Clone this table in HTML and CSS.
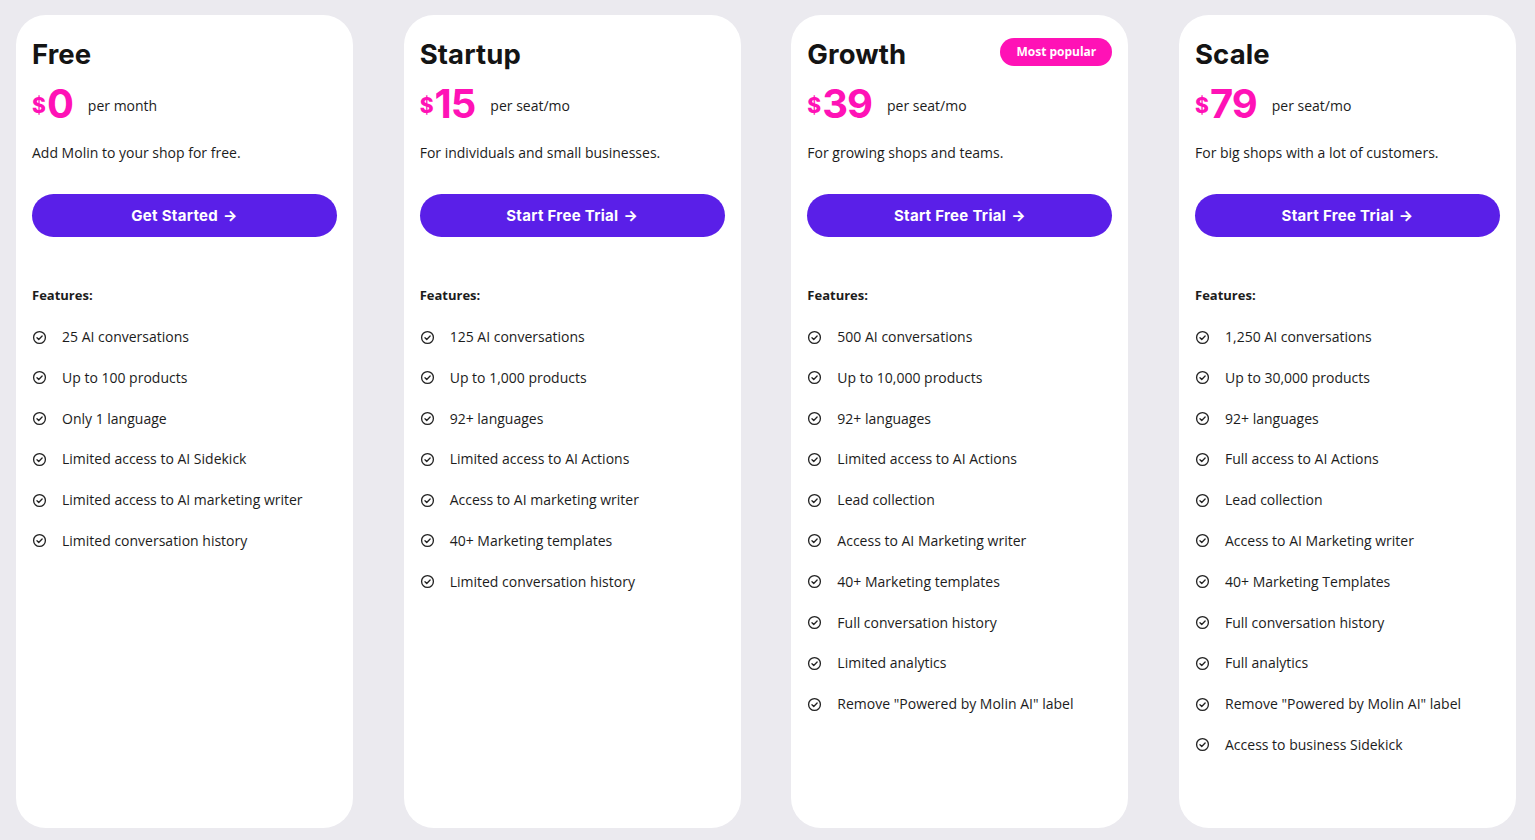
FILE: index.html
```html
<!DOCTYPE html>
<html lang="en">
<head>
<meta charset="utf-8">
<title>Pricing</title>
<link rel="stylesheet" href="styles.css">
</head>
<body>
<main class="plans">
  <section class="card">
    <div class="head"><h2 class="name">Free</h2></div>
    <div class="price"><span class="cur">$</span><span class="amount">0</span><span class="per">per month</span></div>
    <p class="desc">Add Molin to your shop for free.</p>
    <a class="btn" href="#">Get Started <span class="arrow">→</span></a>
    <h3 class="feat-title">Features:</h3>
    <ul class="features">
      <li><svg class="ic" viewBox="0 0 16 16"><circle cx="8" cy="8" r="6.3"/><path d="M5.3 8.2l1.9 1.9 3.6-3.7"/></svg>25 AI conversations</li>
      <li><svg class="ic" viewBox="0 0 16 16"><circle cx="8" cy="8" r="6.3"/><path d="M5.3 8.2l1.9 1.9 3.6-3.7"/></svg>Up to 100 products</li>
      <li><svg class="ic" viewBox="0 0 16 16"><circle cx="8" cy="8" r="6.3"/><path d="M5.3 8.2l1.9 1.9 3.6-3.7"/></svg>Only 1 language</li>
      <li><svg class="ic" viewBox="0 0 16 16"><circle cx="8" cy="8" r="6.3"/><path d="M5.3 8.2l1.9 1.9 3.6-3.7"/></svg>Limited access to AI Sidekick</li>
      <li><svg class="ic" viewBox="0 0 16 16"><circle cx="8" cy="8" r="6.3"/><path d="M5.3 8.2l1.9 1.9 3.6-3.7"/></svg>Limited access to AI marketing writer</li>
      <li><svg class="ic" viewBox="0 0 16 16"><circle cx="8" cy="8" r="6.3"/><path d="M5.3 8.2l1.9 1.9 3.6-3.7"/></svg>Limited conversation history</li>
    </ul>
  </section>

  <section class="card">
    <div class="head"><h2 class="name">Startup</h2></div>
    <div class="price"><span class="cur">$</span><span class="amount">15</span><span class="per">per seat/mo</span></div>
    <p class="desc">For individuals and small businesses.</p>
    <a class="btn" href="#">Start Free Trial <span class="arrow">→</span></a>
    <h3 class="feat-title">Features:</h3>
    <ul class="features">
      <li><svg class="ic" viewBox="0 0 16 16"><circle cx="8" cy="8" r="6.3"/><path d="M5.3 8.2l1.9 1.9 3.6-3.7"/></svg>125 AI conversations</li>
      <li><svg class="ic" viewBox="0 0 16 16"><circle cx="8" cy="8" r="6.3"/><path d="M5.3 8.2l1.9 1.9 3.6-3.7"/></svg>Up to 1,000 products</li>
      <li><svg class="ic" viewBox="0 0 16 16"><circle cx="8" cy="8" r="6.3"/><path d="M5.3 8.2l1.9 1.9 3.6-3.7"/></svg>92+ languages</li>
      <li><svg class="ic" viewBox="0 0 16 16"><circle cx="8" cy="8" r="6.3"/><path d="M5.3 8.2l1.9 1.9 3.6-3.7"/></svg>Limited access to AI Actions</li>
      <li><svg class="ic" viewBox="0 0 16 16"><circle cx="8" cy="8" r="6.3"/><path d="M5.3 8.2l1.9 1.9 3.6-3.7"/></svg>Access to AI marketing writer</li>
      <li><svg class="ic" viewBox="0 0 16 16"><circle cx="8" cy="8" r="6.3"/><path d="M5.3 8.2l1.9 1.9 3.6-3.7"/></svg>40+ Marketing templates</li>
      <li><svg class="ic" viewBox="0 0 16 16"><circle cx="8" cy="8" r="6.3"/><path d="M5.3 8.2l1.9 1.9 3.6-3.7"/></svg>Limited conversation history</li>
    </ul>
  </section>

  <section class="card">
    <div class="head"><h2 class="name">Growth</h2><span class="badge">Most popular</span></div>
    <div class="price"><span class="cur">$</span><span class="amount">39</span><span class="per">per seat/mo</span></div>
    <p class="desc">For growing shops and teams.</p>
    <a class="btn" href="#">Start Free Trial <span class="arrow">→</span></a>
    <h3 class="feat-title">Features:</h3>
    <ul class="features">
      <li><svg class="ic" viewBox="0 0 16 16"><circle cx="8" cy="8" r="6.3"/><path d="M5.3 8.2l1.9 1.9 3.6-3.7"/></svg>500 AI conversations</li>
      <li><svg class="ic" viewBox="0 0 16 16"><circle cx="8" cy="8" r="6.3"/><path d="M5.3 8.2l1.9 1.9 3.6-3.7"/></svg>Up to 10,000 products</li>
      <li><svg class="ic" viewBox="0 0 16 16"><circle cx="8" cy="8" r="6.3"/><path d="M5.3 8.2l1.9 1.9 3.6-3.7"/></svg>92+ languages</li>
      <li><svg class="ic" viewBox="0 0 16 16"><circle cx="8" cy="8" r="6.3"/><path d="M5.3 8.2l1.9 1.9 3.6-3.7"/></svg>Limited access to AI Actions</li>
      <li><svg class="ic" viewBox="0 0 16 16"><circle cx="8" cy="8" r="6.3"/><path d="M5.3 8.2l1.9 1.9 3.6-3.7"/></svg>Lead collection</li>
      <li><svg class="ic" viewBox="0 0 16 16"><circle cx="8" cy="8" r="6.3"/><path d="M5.3 8.2l1.9 1.9 3.6-3.7"/></svg>Access to AI Marketing writer</li>
      <li><svg class="ic" viewBox="0 0 16 16"><circle cx="8" cy="8" r="6.3"/><path d="M5.3 8.2l1.9 1.9 3.6-3.7"/></svg>40+ Marketing templates</li>
      <li><svg class="ic" viewBox="0 0 16 16"><circle cx="8" cy="8" r="6.3"/><path d="M5.3 8.2l1.9 1.9 3.6-3.7"/></svg>Full conversation history</li>
      <li><svg class="ic" viewBox="0 0 16 16"><circle cx="8" cy="8" r="6.3"/><path d="M5.3 8.2l1.9 1.9 3.6-3.7"/></svg>Limited analytics</li>
      <li><svg class="ic" viewBox="0 0 16 16"><circle cx="8" cy="8" r="6.3"/><path d="M5.3 8.2l1.9 1.9 3.6-3.7"/></svg>Remove "Powered by Molin AI" label</li>
    </ul>
  </section>

  <section class="card">
    <div class="head"><h2 class="name">Scale</h2></div>
    <div class="price"><span class="cur">$</span><span class="amount">79</span><span class="per">per seat/mo</span></div>
    <p class="desc">For big shops with a lot of customers.</p>
    <a class="btn" href="#">Start Free Trial <span class="arrow">→</span></a>
    <h3 class="feat-title">Features:</h3>
    <ul class="features">
      <li><svg class="ic" viewBox="0 0 16 16"><circle cx="8" cy="8" r="6.3"/><path d="M5.3 8.2l1.9 1.9 3.6-3.7"/></svg>1,250 AI conversations</li>
      <li><svg class="ic" viewBox="0 0 16 16"><circle cx="8" cy="8" r="6.3"/><path d="M5.3 8.2l1.9 1.9 3.6-3.7"/></svg>Up to 30,000 products</li>
      <li><svg class="ic" viewBox="0 0 16 16"><circle cx="8" cy="8" r="6.3"/><path d="M5.3 8.2l1.9 1.9 3.6-3.7"/></svg>92+ languages</li>
      <li><svg class="ic" viewBox="0 0 16 16"><circle cx="8" cy="8" r="6.3"/><path d="M5.3 8.2l1.9 1.9 3.6-3.7"/></svg>Full access to AI Actions</li>
      <li><svg class="ic" viewBox="0 0 16 16"><circle cx="8" cy="8" r="6.3"/><path d="M5.3 8.2l1.9 1.9 3.6-3.7"/></svg>Lead collection</li>
      <li><svg class="ic" viewBox="0 0 16 16"><circle cx="8" cy="8" r="6.3"/><path d="M5.3 8.2l1.9 1.9 3.6-3.7"/></svg>Access to AI Marketing writer</li>
      <li><svg class="ic" viewBox="0 0 16 16"><circle cx="8" cy="8" r="6.3"/><path d="M5.3 8.2l1.9 1.9 3.6-3.7"/></svg>40+ Marketing Templates</li>
      <li><svg class="ic" viewBox="0 0 16 16"><circle cx="8" cy="8" r="6.3"/><path d="M5.3 8.2l1.9 1.9 3.6-3.7"/></svg>Full conversation history</li>
      <li><svg class="ic" viewBox="0 0 16 16"><circle cx="8" cy="8" r="6.3"/><path d="M5.3 8.2l1.9 1.9 3.6-3.7"/></svg>Full analytics</li>
      <li><svg class="ic" viewBox="0 0 16 16"><circle cx="8" cy="8" r="6.3"/><path d="M5.3 8.2l1.9 1.9 3.6-3.7"/></svg>Remove "Powered by Molin AI" label</li>
      <li><svg class="ic" viewBox="0 0 16 16"><circle cx="8" cy="8" r="6.3"/><path d="M5.3 8.2l1.9 1.9 3.6-3.7"/></svg>Access to business Sidekick</li>
    </ul>
  </section>
</main>
</body>
</html>
```

FILE: styles.css
```css
* { box-sizing: border-box; }

html, body {
  margin: 0;
  height: 100%;
}

body {
  background: #ebeaef;
  font-family: "Open Sans", "Liberation Sans", sans-serif;
  color: #1c1c1c;
  overflow: hidden;
}

.plans {
  display: grid;
  grid-template-columns: repeat(4, 1fr);
  gap: 50.7px;
  padding: 15px 19px 12px 16px;
  height: 840px;
}

.card {
  background: #ffffff;
  border-radius: 30px;
  padding: 22px 16px 20px;
  display: flex;
  flex-direction: column;
}

.head {
  display: flex;
  align-items: center;
  justify-content: space-between;
  height: 34px;
}

.name {
  margin: 0;
  font-family: Inter, "Liberation Sans", sans-serif;
  font-weight: 700;
  font-size: 27.5px;
  line-height: 34px;
  letter-spacing: 0.1px;
  color: #141414;
}

.badge {
  background: #ff12b6;
  color: #ffffff;
  font-weight: 700;
  font-size: 12px;
  line-height: 28px;
  height: 28px;
  padding: 0 16px;
  border-radius: 14px;
  margin-top: -4px;
}

.price {
  display: flex;
  align-items: center;
  height: 40px;
  margin-top: 13px;
}

.cur {
  font-family: Inter, "Liberation Sans", sans-serif;
  font-weight: 800;
  font-size: 21px;
  color: #ff12b6;
  margin-top: 2px;
  margin-right: 1px;
}

.amount {
  font-family: Inter, "Liberation Sans", sans-serif;
  font-weight: 700;
  font-size: 40px;
  line-height: 40px;
  letter-spacing: -1px;
  color: #ff12b6;
}

.per {
  font-size: 14px;
  margin-left: 15px;
  margin-top: 2px;
  color: #1c1c1c;
}

.desc {
  margin: 19px 0 0;
  font-size: 14px;
  line-height: 20px;
}

.btn {
  margin-top: 31px;
  height: 43px;
  border-radius: 22px;
  background: #5a1fe8;
  color: #ffffff;
  text-decoration: none;
  display: flex;
  align-items: center;
  justify-content: center;
  font-family: Inter, "Liberation Sans", sans-serif;
  font-weight: 700;
  font-size: 15px;
  letter-spacing: 0.3px;
}

.arrow {
  margin-left: 5px;
  font-size: 15px;
}

.feat-title {
  margin: 49px 0 0;
  font-size: 13px;
  line-height: 18px;
  font-weight: 700;
  color: #1c1c1c;
}

.features {
  list-style: none;
  margin: 23px 0 0;
  padding: 0;
  display: flex;
  flex-direction: column;
  gap: 20.8px;
}

.features li {
  display: flex;
  align-items: center;
  font-size: 14px;
  line-height: 20px;
}

.ic {
  width: 15px;
  height: 15px;
  margin-right: 15px;
  flex: none;
  fill: none;
  stroke: #222222;
  stroke-width: 1.4;
  stroke-linecap: round;
  stroke-linejoin: round;
}
```
